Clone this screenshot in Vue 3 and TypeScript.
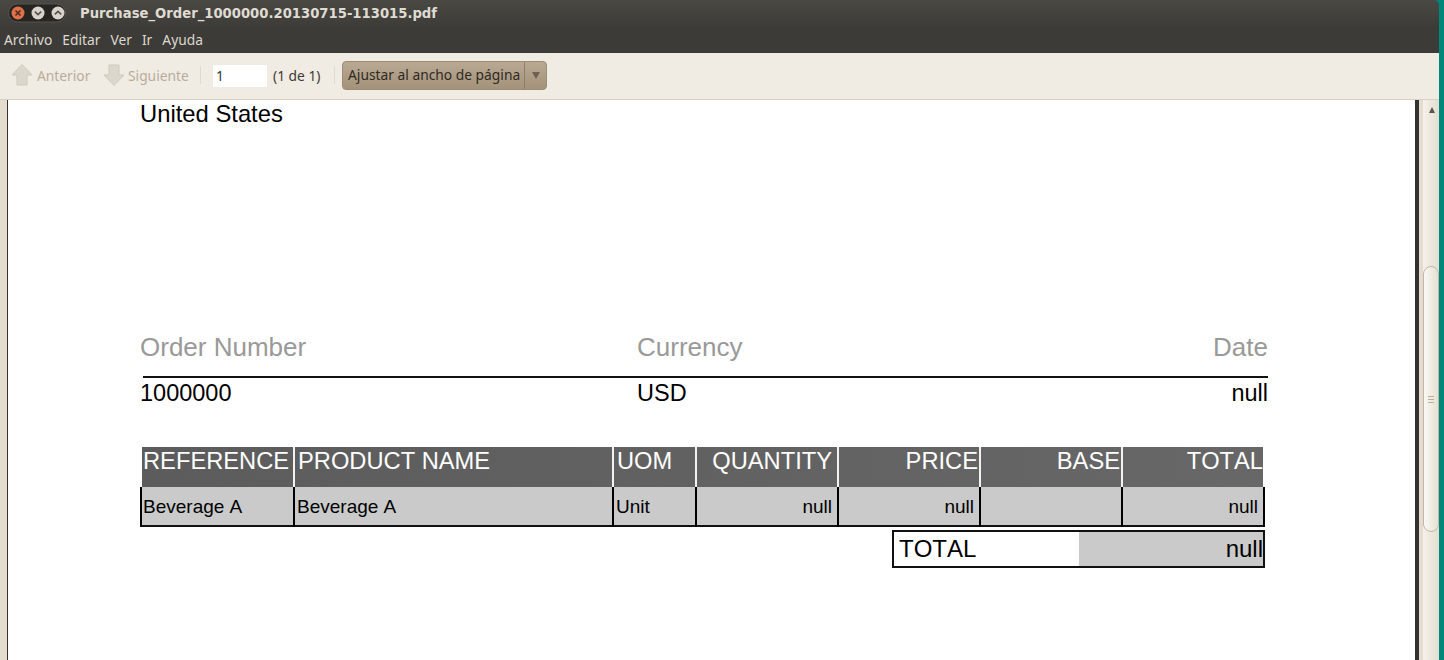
<script setup lang="ts">
const menus: string[] = ['Archivo', 'Editar', 'Ver', 'Ir', 'Ayuda']
interface Col { head: string; cell: string; right: boolean }
const cols: Col[] = [
  { head: 'REFERENCE', cell: 'Beverage A', right: false },
  { head: 'PRODUCT NAME', cell: 'Beverage A', right: false },
  { head: 'UOM', cell: 'Unit', right: false },
  { head: 'QUANTITY', cell: 'null', right: true },
  { head: 'PRICE', cell: 'null', right: true },
  { head: 'BASE', cell: '', right: true },
  { head: 'TOTAL', cell: 'null', right: true },
]
</script>

<template>
  <div class="desktop">
    <div class="window">
      <header class="titlebar">
        <div class="controls">
          <svg width="58" height="20" viewBox="0 0 58 20">
            <rect x="0.5" y="1" width="57" height="18" rx="9" fill="#262522" stroke="#55524c" />
            <circle cx="10" cy="10" r="6.5" fill="#e0704a" />
            <path d="M7.5 7.5l5 5M12.5 7.5l-5 5" stroke="#4a2a1c" stroke-width="1.6" />
            <circle cx="30" cy="10" r="6.5" fill="#d8d4cc" />
            <path d="M26.8 8.6l3.2 3 3.2-3" fill="none" stroke="#55524c" stroke-width="1.6" />
            <circle cx="50" cy="10" r="6.5" fill="#d8d4cc" />
            <path d="M46.8 11.4l3.2-3 3.2 3" fill="none" stroke="#55524c" stroke-width="1.6" />
          </svg>
        </div>
        <span class="title">Purchase_Order_1000000.20130715-113015.pdf</span>
      </header>
      <nav class="menubar">
        <span v-for="m in menus" :key="m">{{ m }}</span>
      </nav>
      <div class="toolbar">
        <svg class="arrow" width="22" height="24" viewBox="0 0 22 24">
          <path d="M11 1.5L21 12h-5v10H6V12H1z" fill="#dcd7cd" stroke="#cfc9bd" />
        </svg>
        <span class="dim first">Anterior</span>
        <svg class="arrow second" width="22" height="24" viewBox="0 0 22 24">
          <path d="M11 22.5L21 12h-5V2H6v10H1z" fill="#dcd7cd" stroke="#cfc9bd" />
        </svg>
        <span class="dim next">Siguiente</span>
        <i class="sep sep-a"></i>
        <div class="pageinput">1</div>
        <span class="count">(1 de 1)</span>
        <i class="sep sep-b"></i>
        <div class="fit">
          <span class="fit-label">Ajustar al ancho de página</span>
          <span class="fit-arrow"><svg width="8" height="7" viewBox="0 0 8 7"><path d="M0 0h8L4 7z" fill="#6b6152" /></svg></span>
        </div>
      </div>
      <main class="viewer">
        <div class="gutter"></div>
        <article class="page">
          <p class="address">United States</p>
          <section class="order">
            <div class="order-labels">
              <span class="c1">Order Number</span>
              <span class="c2">Currency</span>
              <span class="c3">Date</span>
            </div>
            <div class="order-values">
              <span class="c1">1000000</span>
              <span class="c2">USD</span>
              <span class="c3">null</span>
            </div>
          </section>
          <section class="table">
            <div class="thead">
              <div v-for="c in cols" :key="c.head" class="th" :class="{ right: c.right }">{{ c.head }}</div>
            </div>
            <div class="tbody">
              <div v-for="c in cols" :key="c.head" class="td" :class="{ right: c.right }">{{ c.cell }}</div>
            </div>
          </section>
          <div class="total">
            <span class="total-label">TOTAL</span>
            <span class="total-value">null</span>
          </div>
        </article>
        <div class="pageedge"></div>
        <aside class="scrollbar">
          <svg class="up" width="6" height="6" viewBox="0 0 6 6"><path d="M3 0L6 6H0z" fill="#5a564e" /></svg>
          <div class="thumb"><div class="grip"><i></i><i></i><i></i></div></div>
        </aside>
      </main>
    </div>
  </div>
</template>

<style>
html, body { margin: 0; padding: 0; background: #008577; }
</style>

<style scoped>
.desktop {
  width: 1444px;
  height: 660px;
  overflow: hidden;
  background: #00877a;
}
.window {
  width: 1439px;
  height: 660px;
  display: flex;
  flex-direction: column;
  border-top-right-radius: 5px;
  overflow: hidden;
  font-family: "Noto Sans", sans-serif;
}
.titlebar {
  height: 27px;
  flex: none;
  display: flex;
  align-items: center;
  padding-left: 8px;
  background: linear-gradient(#4a4843, #3e3c38);
}
.controls { width: 72px; height: 20px; display: flex; margin-top: -1px; }
.title {
  color: #dfdbd2;
  font-family: "DejaVu Sans", sans-serif;
  font-weight: 700;
  font-size: 13.2px;
  margin-top: -1px;
}
.menubar {
  height: 26px;
  flex: none;
  display: flex;
  gap: 10px;
  padding: 3px 0 0 4px;
  box-sizing: border-box;
  background: #3d3b37;
  color: #dcd8cf;
  font-size: 13.8px;
}
.toolbar {
  height: 47px;
  flex: none;
  display: flex;
  align-items: center;
  box-sizing: border-box;
  padding-left: 11px;
  background: #f0ebe3;
  border-bottom: 1px solid #d8d0c2;
  font-size: 13.8px;
  padding-bottom: 2px;
}
.dim { color: #b8ad9c; }
.first { margin-left: 4px; width: 52px; white-space: nowrap; }
.second { margin-left: 14px; }
.next { margin-left: 3px; width: 61px; white-space: nowrap; }
.sep { width: 1px; height: 18px; background: #e0d9cd; }
.sep-a { margin-left: 11px; }
.sep-b { margin-left: 11px; }
.pageinput {
  margin-left: 12px;
  width: 54px;
  height: 22px;
  box-sizing: border-box;
  padding: 1px 0 0 3px;
  background: #fff;
  color: #333;
  margin-top: 2px;
}
.count { margin-left: 6px; width: 50px; color: #3c3a35; white-space: nowrap; }
.fit {
  margin-left: 7px;
  width: 205px;
  height: 29px;
  box-sizing: border-box;
  display: flex;
  border: 1px solid #9a8c77;
  border-radius: 4px;
  background: linear-gradient(#b9a993, #a4927a);
  color: #2e2a24;
}
.fit-label { width: 182px; box-sizing: border-box; padding: 3px 0 0 5px; white-space: nowrap; border-right: 1px solid #8d7f6a; }
.fit-arrow { flex: 1; display: flex; align-items: center; justify-content: center; }
.viewer { flex: 1; min-height: 0; display: flex; background: #ede8df; }
.gutter { width: 7px; flex: none; background: #e3dccf; border-right: 1px solid #33322f; }
.page {
  width: 1407px;
  flex: none;
  box-sizing: border-box;
  background: #fff;
  padding: 0 0 0 132px;
  font-family: "Liberation Sans", Arial, sans-serif;
  font-kerning: none;
  color: #000;
}
.address { margin: 0; height: 227px; font-size: 23.8px; line-height: 28px; }
.order { width: 1128px; }
.order-labels, .order-values { display: grid; grid-template-columns: 497px 1fr 1fr; }
.c3 { text-align: right; }
.order-labels { height: 49px; color: #999; font-size: 26px; line-height: 40px; }
.order-values {
  height: 71px;
  margin-left: 3px;
  grid-template-columns: 494px 1fr 1fr;
  border-top: 2px solid #111;
  font-size: 23.5px;
  line-height: 30px;
  box-sizing: border-box;
}
.order-values .c1 { margin-left: -3px; }
.table { width: 1125px; }
.thead, .tbody {
  display: grid;
  grid-template-columns: 155px 319px 83px 142px 142px 142px 142px;
}
.thead {
  height: 40px;
  margin: 0 2px;
  grid-template-columns: 153px 319px 83px 142px 142px 142px 140px;
  background: linear-gradient(90deg, #5c5c5c, #676767);
}
.th {
  box-sizing: border-box;
  padding: 0 0 0 3px;
  border-right: 2px solid #f2f2f2;
  color: #fff;
  font-size: 23.7px;
  line-height: 28px;
  white-space: nowrap;
}
.th:first-child { padding-left: 1px; }
.th:last-child { border-right: 0; }
.th.right { text-align: right; padding: 0 1px 0 0; }
.th:nth-child(4).right { padding-right: 5px; }
.th:last-child.right { padding-right: 0; }
.tbody { height: 40px; background: #cacaca; border-bottom: 2px solid #111; box-sizing: border-box; }
.td {
  box-sizing: border-box;
  padding-left: 2px;
  border-right: 2px solid #000;
  font-size: 19px;
  line-height: 40px;
  white-space: nowrap;
}
.td:first-child { border-left: 2px solid #000; padding-left: 1px; }
.td.right { text-align: right; padding: 0 5px 0 0; }
.total {
  margin: 3px 0 0 752px;
  width: 373px;
  height: 38px;
  box-sizing: border-box;
  display: grid;
  grid-template-columns: 185px 1fr;
  border: 2px solid #111;
  font-size: 24px;
  line-height: 33px;
}
.total-label { padding-left: 5px; background: #fff; }
.total-value { background: #cacaca; text-align: right; }
.pageedge { width: 4px; flex: none; background: #33322f; }
.scrollbar {
  flex: 1;
  position: relative;
  border-left: 4px solid #e3dccf;
  background: linear-gradient(90deg, #f5f1ea, #e4ddd1);
}
.up { position: absolute; left: 6px; top: 7px; }
.thumb {
  position: absolute;
  left: 0;
  top: 166px;
  width: 16px;
  height: 266px;
  box-sizing: border-box;
  border: 1px solid #c2b6a3;
  border-radius: 8px;
  background: linear-gradient(90deg, #fbf9f5, #e6dfd3);
  display: flex;
  align-items: center;
  justify-content: center;
}
.grip { display: flex; flex-direction: column; gap: 2px; }
.grip i { display: block; width: 6px; height: 1px; background: #bcae99; }
</style>
